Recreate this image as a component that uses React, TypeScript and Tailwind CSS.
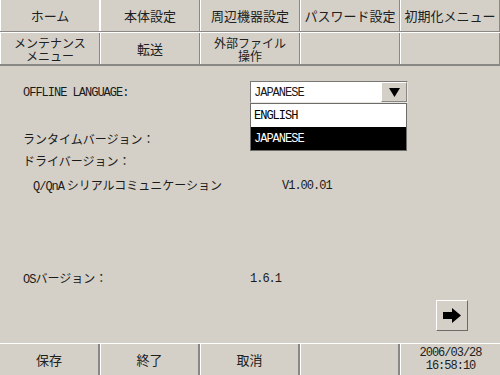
import React from "react";

const jp = { fontFamily: '"Noto Sans CJK JP", "Noto Sans", sans-serif' };
const mono = { fontFamily: '"Liberation Mono", "DejaVu Sans Mono", monospace' };

const topTabs = ["ホーム", "本体設定", "周辺機器設定", "パスワード設定", "初期化メニュー"];
const subTabs = [["メンテナンス", "メニュー"], ["転送"], ["外部ファイル", "操作"], [], []];
const footer = ["保存", "終了", "取消", ""];

function Tab({ lines, active }: { lines: string[]; active?: boolean }) {
  const two = lines.length > 1;
  return (
    <div
      className={`h-[31px] flex items-center justify-center text-center text-[#202020] border-l border-l-white border-r border-r-[#8a8884] ${
        two ? "text-[12px] leading-[13px]" : "text-[13px] leading-[14px]"
      } ${active ? "border-r-white" : ""}`}
    >
      {lines.length > 0 && (
        <span>
          {lines.map((l, i) => (
            <React.Fragment key={l}>
              {i > 0 && <br />}
              {l}
            </React.Fragment>
          ))}
        </span>
      )}
    </div>
  );
}

function Lat({ children }: { children: React.ReactNode }) {
  return (
    <span className="text-[12px] tracking-[-1px]" style={mono}>
      {children}
    </span>
  );
}

export default function App() {
  return (
    <div className="w-[500px] h-[375px] bg-[#d4d0c8] flex flex-col overflow-hidden" style={jp}>
      {/* tab header */}
      <div className="grid grid-cols-5 border-b border-b-[#8a8884]">
        {topTabs.map((t, i) => (
          <Tab key={t} lines={[t]} active={i === 0} />
        ))}
      </div>
      <div className="grid grid-cols-5 border-t border-t-white border-b-2 border-b-[#8a8884]">
        {subTabs.map((t, i) => (
          <Tab key={i} lines={t} />
        ))}
      </div>

      {/* content */}
      <div className="flex-1 flex flex-col text-[12px] text-[#1a1a1a]">
        <div className="mt-[15px] h-[22px] flex items-center relative">
          <span className="w-[250px] pl-[23px]">
            <Lat>OFFLINE LANGUAGE:</Lat>
          </span>
          <div className="w-[158px] h-[22px] bg-white border border-t-[#7a7874] border-l-[#7a7874] border-r-[#e8e6e2] border-b-[#e8e6e2] flex items-center">
            <span className="flex-1 pl-[3px]">
              <Lat>JAPANESE</Lat>
            </span>
            <div className="w-[26px] h-[20px] bg-[#d4d0c8] flex items-center justify-center border border-t-white border-l-white border-r-[#8a8884] border-b-[#8a8884]">
              <svg width="11" height="9" viewBox="0 0 11 9">
                <polygon points="0,0 11,0 5.5,9" fill="#000" />
              </svg>
            </div>
          </div>
          {/* open list */}
          <div className="absolute left-[250px] top-[22px] w-[157px] border border-[#6e6c68] bg-white">
            <div className="h-[23px] flex items-center pl-[3px] text-black">
              <Lat>ENGLISH</Lat>
            </div>
            <div className="h-[23px] flex items-center pl-[3px] bg-black text-white">
              <Lat>JAPANESE</Lat>
            </div>
          </div>
        </div>

        <div className="mt-[25px] h-[22px] flex items-center pl-[23px]">ランタイムバージョン：</div>
        <div className="h-[22px] flex items-center pl-[23px]">ドライバージョン：</div>
        <div className="mt-[3px] h-[22px] flex items-center">
          <span className="w-[282px] pl-[33px]">
            <Lat>Q/QnA</Lat> シリアルコミュニケーション
          </span>
          <Lat>V1.00.01</Lat>
        </div>

        <div className="mt-[71px] h-[22px] flex items-center">
          <span className="w-[250px] pl-[23px]">
            <Lat>OS</Lat>バージョン：
          </span>
          <Lat>1.6.1</Lat>
        </div>

        <div className="mt-[10px] flex justify-end pr-[32px]">
          <button className="w-[32px] h-[31px] flex items-center justify-center bg-[#d4d0c8] border border-t-white border-l-white border-r-[#6e6c68] border-b-[#6e6c68]">
            <svg width="18" height="15" viewBox="0 0 18 15">
              <polygon points="0,4 9,4 9,0 18,7.5 9,15 9,11 0,11" fill="#000" />
            </svg>
          </button>
        </div>
      </div>

      {/* footer */}
      <div className="grid grid-cols-5 h-[32px] border-t border-t-white">
        {footer.map((f, i) => (
          <div
            key={i}
            className="flex items-center justify-center text-[13px] text-[#202020] border-r-2 border-r-[#8a8884] border-l border-l-white first:border-l-0"
          >
            {f}
          </div>
        ))}
        <div
          className="flex flex-col items-center justify-center text-[12px] leading-[13px] tracking-[-1px] text-[#202020] border-l border-l-white"
          style={mono}
        >
          <span>2006/03/28</span>
          <span>16:58:10</span>
        </div>
      </div>
    </div>
  );
}
